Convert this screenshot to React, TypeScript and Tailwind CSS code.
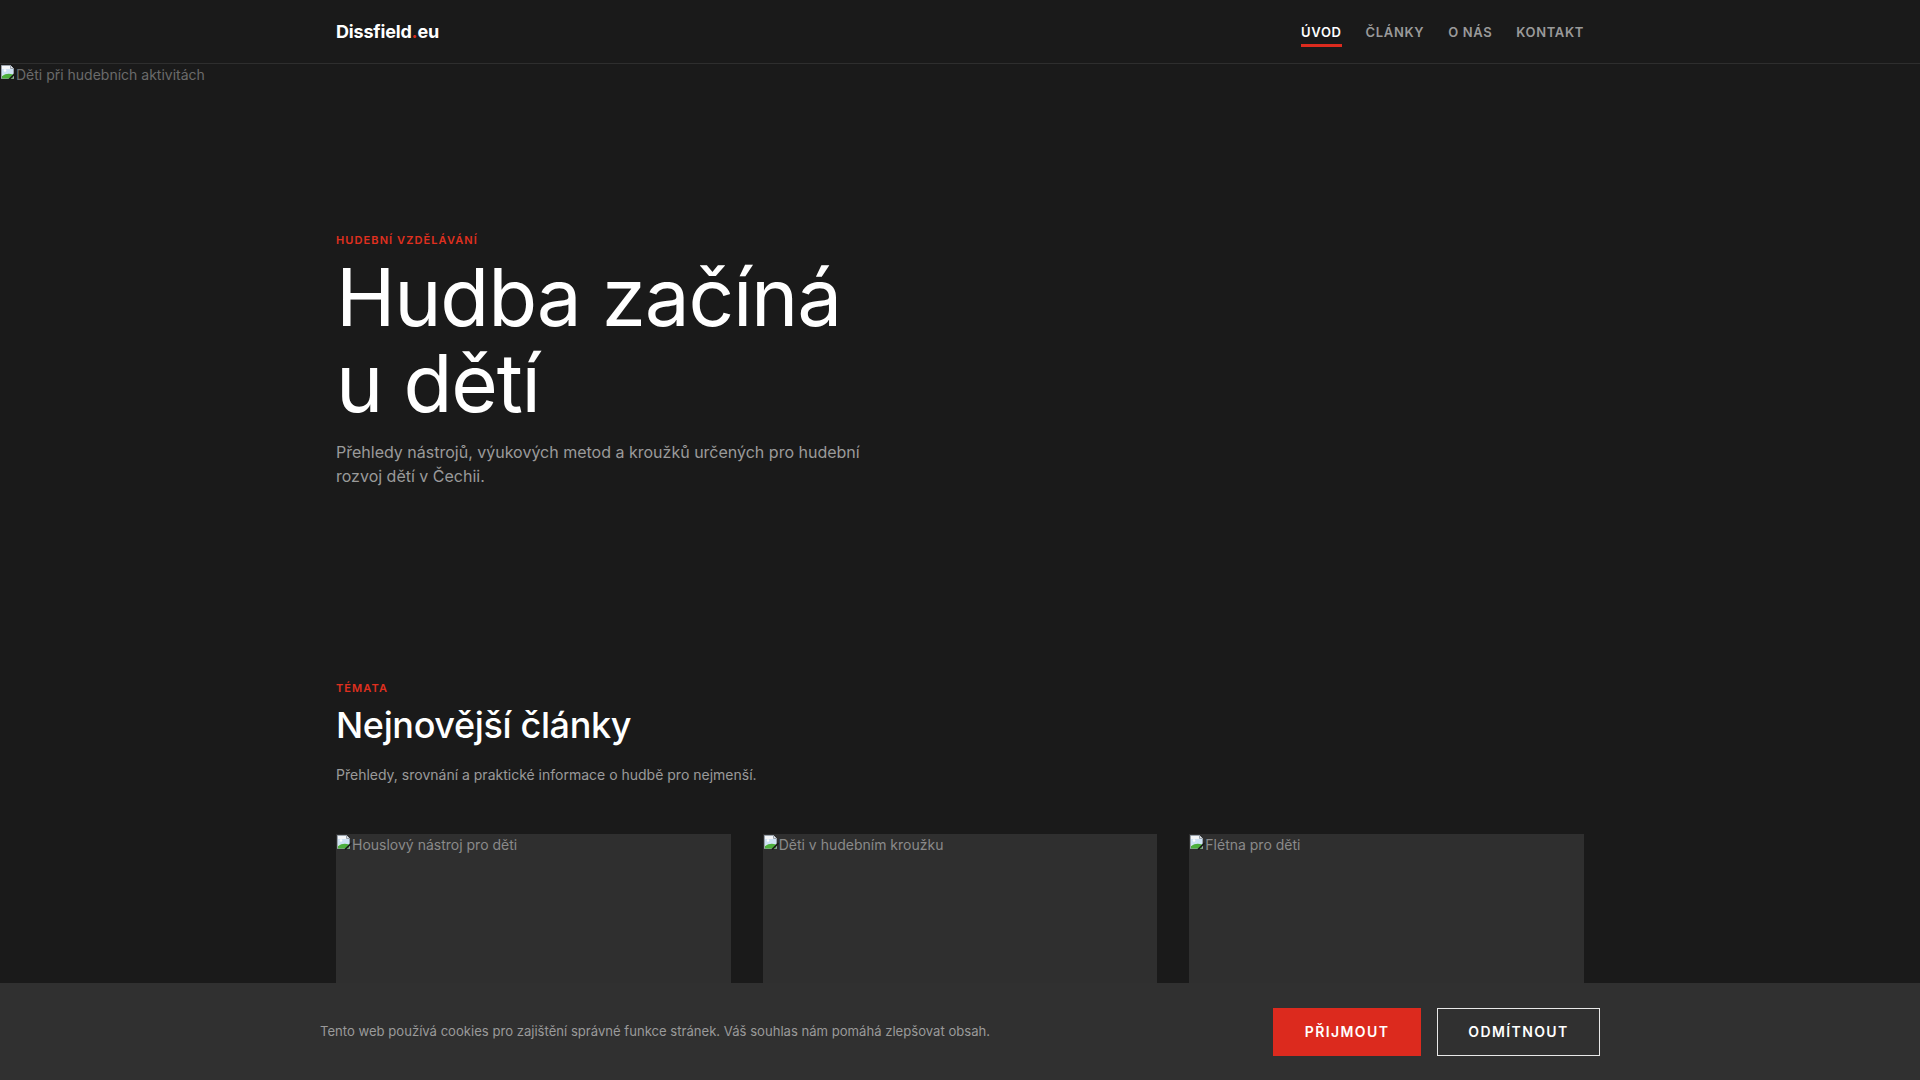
import React from "react";

function BrokenImg() {
  return (
    <svg width="16" height="16" viewBox="0 0 16 16" className="inline-block" style={{ verticalAlign: "baseline" }}>
      <path d="M1.5 1.5h9l3 3v10h-12z" fill="#f4f6f8" stroke="#9aa3ad" strokeWidth="1" />
      <path d="M10.5 1.5v3h3" fill="#dfe3e8" stroke="#9aa3ad" strokeWidth="1" />
      <rect x="2" y="5" width="11" height="6" fill="#cfe3f5" />
      <circle cx="5" cy="6.5" r="1.3" fill="#ffffff" />
      <path d="M2 14.5 L2 12 Q7 8.5 13 10.5 L13 14.5 Z" fill="#4caf3c" />
      <path d="M9 15.5 L15.5 9" stroke="#1a1a1a" strokeWidth="1.6" />
    </svg>
  );
}

function AltImg({ text, color }: { text: string; color: string }) {
  return (
    <div className="text-[14px] leading-normal" style={{ color }}>
      <BrokenImg />
      {text}
    </div>
  );
}

const cards = [
  "Houslový nástroj pro děti",
  "Děti v hudebním kroužku",
  "Flétna pro děti",
];

export default function App() {
  return (
    <div
      className="min-h-screen bg-[#1a1a1a] text-white"
      style={{ fontFamily: "Inter, 'Noto Sans', sans-serif" }}
    >
      {/* Header */}
      <header className="border-b border-[#2e2e2e]">
        <div className="mx-auto flex h-[63px] max-w-[1248px] items-center justify-between">
          <div className="text-[18px] font-bold tracking-[-0.01em] text-white">
            Dissfield<span className="text-[#dc2b1e]">.</span>eu
          </div>
          <nav className="flex items-center gap-6 pt-[2px] text-[13px] font-semibold tracking-[0.05em]">
            <a className="relative text-white">
              ÚVOD
              <span className="absolute left-0 right-0 top-[21px] h-[3px] bg-[#dc2b1e]" />
            </a>
            <a className="text-[#9a9a9a]">ČLÁNKY</a>
            <a className="text-[#9a9a9a]">O NÁS</a>
            <a className="text-[#9a9a9a]">KONTAKT</a>
          </nav>
        </div>
      </header>

      {/* Hero */}
      <section className="relative">
        <div className="absolute inset-0">
          <AltImg text="Děti při hudebních aktivitách" color="#6b6b6b" />
        </div>
        <div className="relative mx-auto max-w-[1248px] pt-[168px] pb-[168px]">
          <div className="text-[11px] font-semibold leading-[16px] tracking-[0.1em] text-[#e0301f]">
            HUDEBNÍ VZDĚLÁVÁNÍ
          </div>
          <h1 className="mt-[6px] max-w-[520px] text-[80px] font-normal leading-[86px] tracking-[-0.015em] text-white">
            Hudba začíná u dětí
          </h1>
          <p className="mt-[14px] max-w-[540px] text-[16px] leading-[24px] text-[#9a9a9a]">
            Přehledy nástrojů, výukových metod a kroužků určených pro hudební rozvoj dětí v Čechii.
          </p>
        </div>
      </section>

      {/* Articles */}
      <section className="mx-auto max-w-[1248px] pt-[24px] pb-24">
        <div className="text-[11px] font-semibold leading-[16px] tracking-[0.1em] text-[#e0301f]">
          TÉMATA
        </div>
        <h2 className="mt-[8px] text-[36px] font-medium leading-[43px] tracking-[-0.01em] text-white">
          Nejnovější články
        </h2>
        <p className="mt-[18px] text-[14px] leading-[20px] text-[#9a9a9a]">
          Přehledy, srovnání a praktické informace o hudbě pro nejmenší.
        </p>
        <div className="mt-[49px] grid grid-cols-3 gap-8">
          {cards.map((c) => (
            <div key={c} className="bg-[#2f2f2f]">
              <div className="h-[260px]">
                <AltImg text={c} color="#8a8a8a" />
              </div>
              <div className="h-[160px]" />
            </div>
          ))}
        </div>
      </section>

      {/* Cookie bar */}
      <div className="fixed bottom-0 left-0 right-0 bg-[#303030]">
        <div className="mx-auto flex h-[97px] max-w-[1280px] items-center justify-between">
          <p className="text-[13.1px] text-[#9a9a9a]">
            Tento web používá cookies pro zajištění správné funkce stránek. Váš souhlas nám pomáhá zlepšovat obsah.
          </p>
          <div className="flex gap-4">
            <button className="h-[48px] w-[148px] bg-[#dc2a1e] text-[14px] font-semibold tracking-[0.1em] text-white">
              PŘIJMOUT
            </button>
            <button className="h-[48px] w-[163px] border border-[#e8e8e8] text-[14px] font-semibold tracking-[0.1em] text-white">
              ODMÍTNOUT
            </button>
          </div>
        </div>
      </div>
    </div>
  );
}
